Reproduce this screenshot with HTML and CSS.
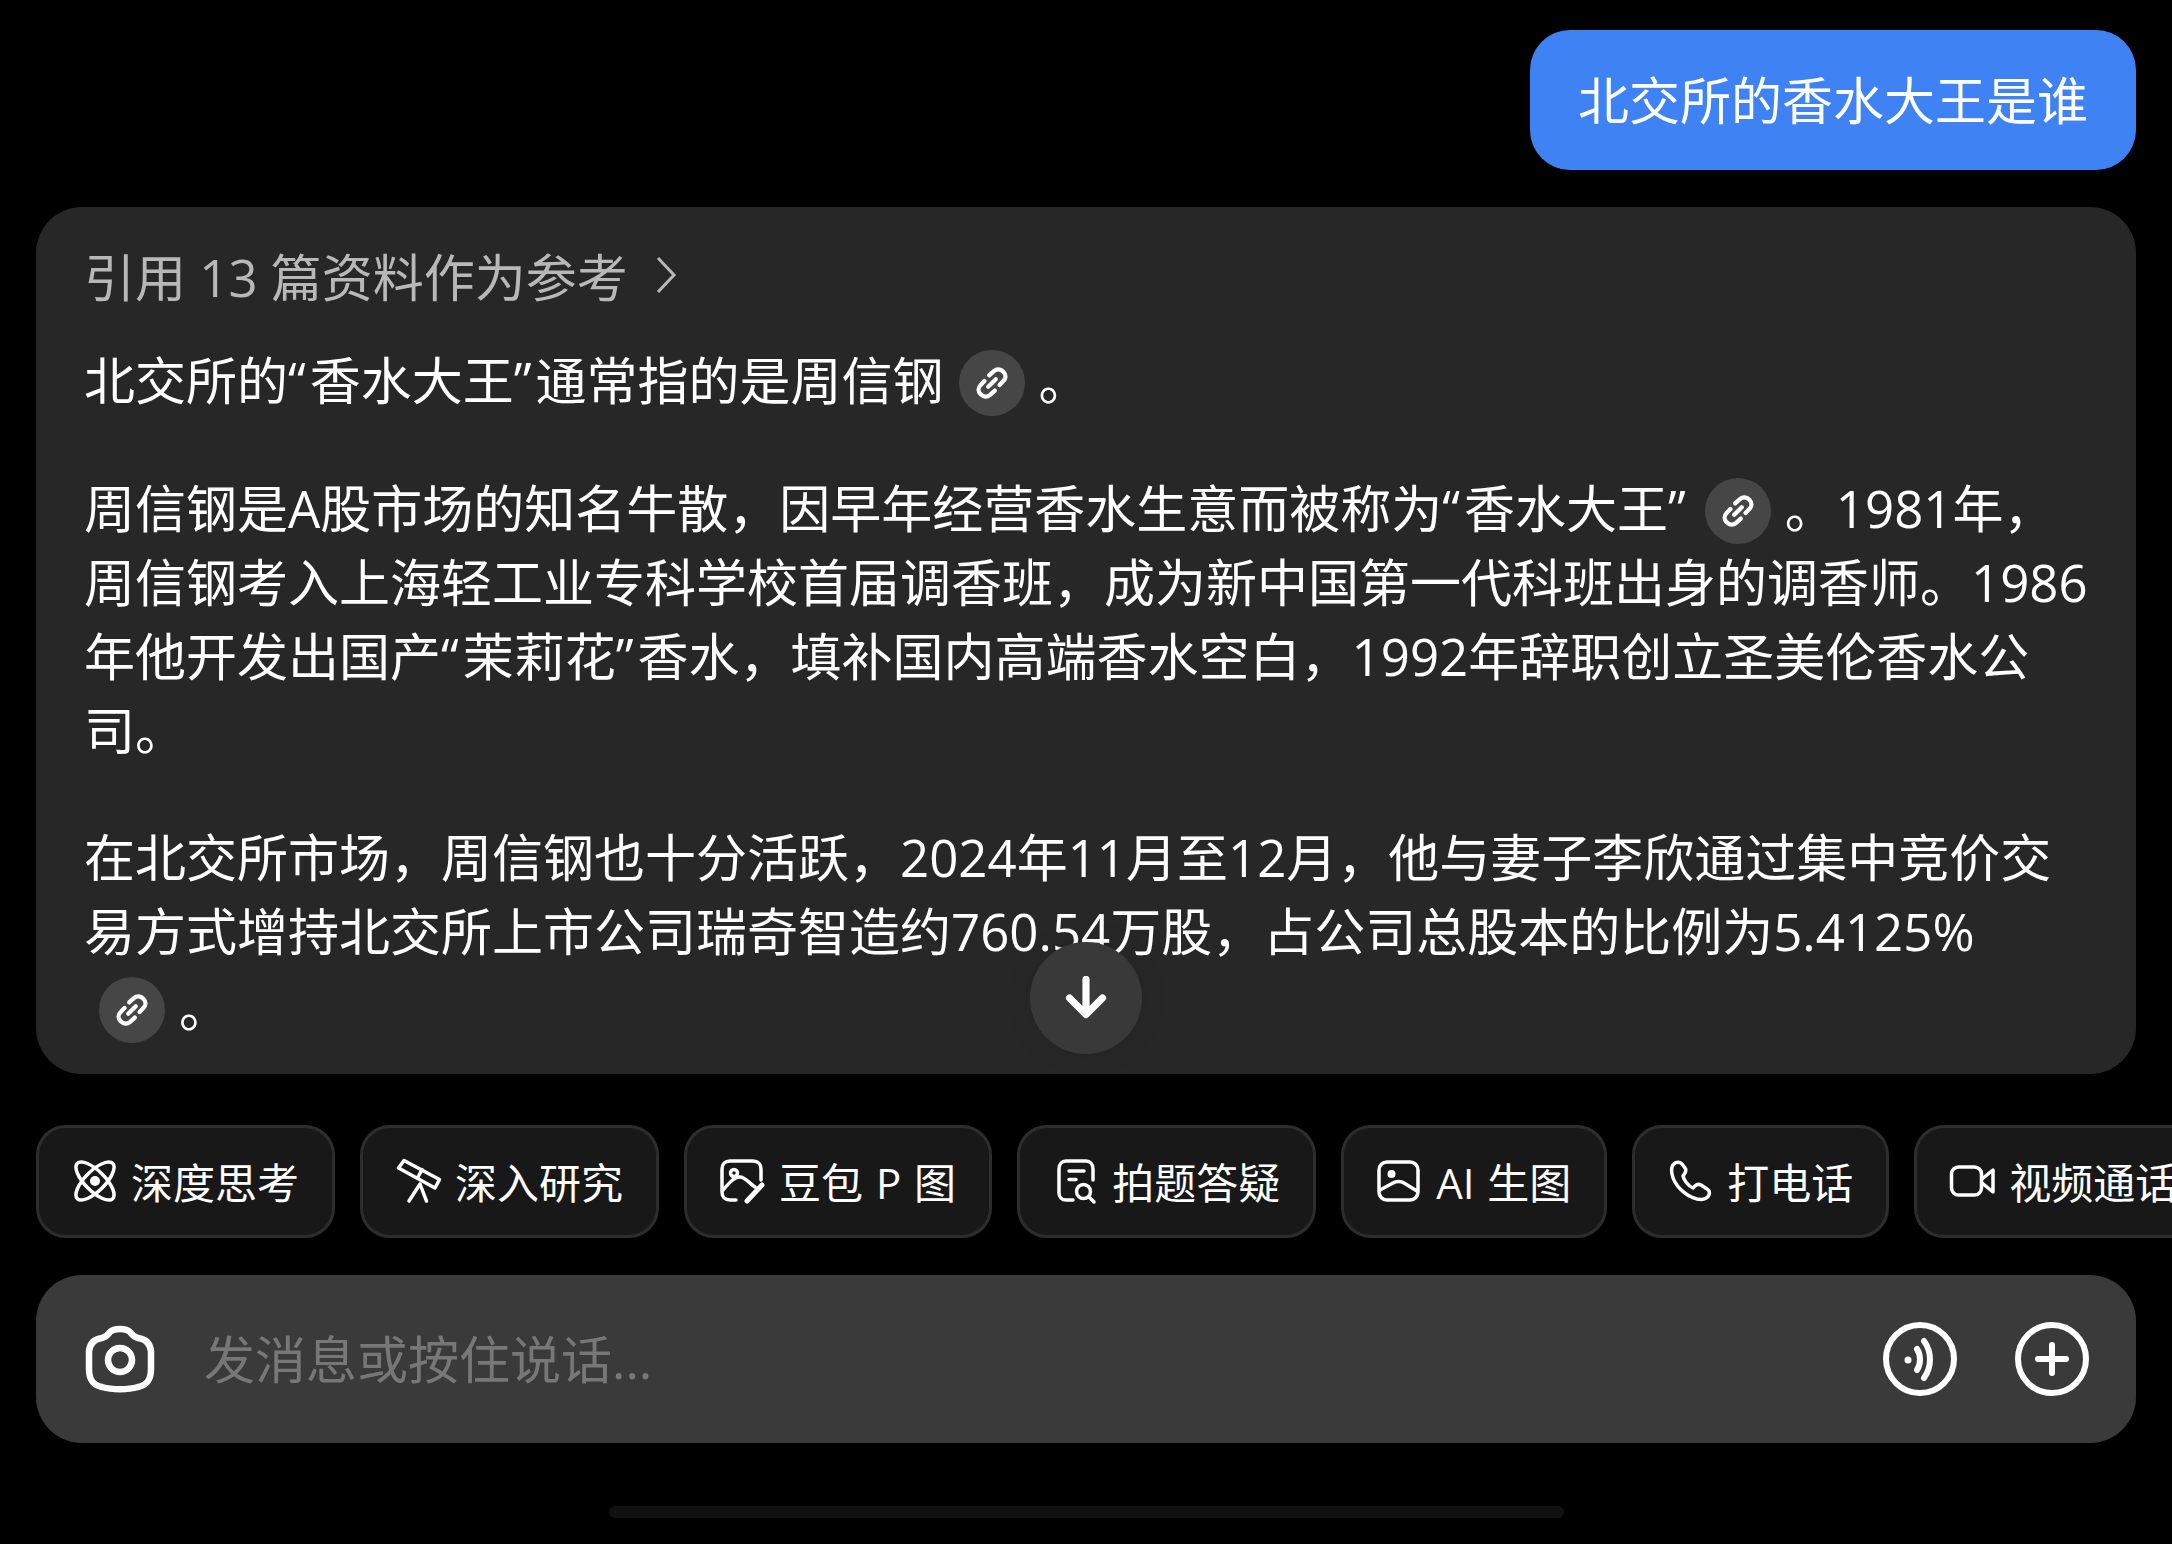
FILE: index.html
```html
<!DOCTYPE html>
<html lang="zh-CN">
<head>
    <meta charset="UTF-8">
    <title>豆包</title>
    <link rel="stylesheet" href="styles.css">
</head>
<body>
    <div class="user-row">
        <div class="user-bubble">北交所的香水大王是谁</div>
    </div>

    <div class="answer-card">
        <div class="refs">
            <span>引用 13 篇资料作为参考</span>
            <svg class="refs-arrow" viewBox="0 0 24 40"><path d="M4 3 L20 20 L4 37"/></svg>
        </div>
        <p>北交所的<span class="quote">“</span>香水大王<span class="quote">”</span>通常指的是周信钢<span class="link-badge"><svg viewBox="0 0 36 36"><use href="#chain"/></svg></span>。</p>
        <p>周信钢是A股市场的知名牛散，因早年经营香水生意而被称为<span class="quote">“</span>香水大王<span class="quote">”</span><span class="link-badge"><svg viewBox="0 0 36 36"><use href="#chain"/></svg></span>。1981年，<br>周信钢考入上海轻工业专科学校首届调香班，成为新中国第一代科班出身的调香师。1986<br>年他开发出国产<span class="quote">“</span>茉莉花<span class="quote">”</span>香水，填补国内高端香水空白，1992年辞职创立圣美伦香水公<br>司。</p>
        <p>在北交所市场，周信钢也十分活跃，2024年11月至12月，他与妻子李欣通过集中竞价交<br>易方式增持北交所上市公司瑞奇智造约760.54万股，占公司总股本的比例为5.4125%<span class="last-line"><span class="link-badge"><svg viewBox="0 0 36 36"><use href="#chain"/></svg></span>。</span></p>
        <button class="scroll-down">
            <svg viewBox="0 0 40 40"><path d="M20 3 V34 M5 20 L20 35 L35 20"/></svg>
        </button>
    </div>

    <div class="chips">
        <div class="chip">
            <svg viewBox="0 0 44 44"><ellipse cx="23" cy="22" rx="10" ry="25" transform="rotate(-45 23 22)"/><ellipse cx="23" cy="22" rx="10" ry="25" transform="rotate(45 23 22)"/><circle class="solid" cx="23" cy="22" r="5"/></svg>
            <span>深度思考</span>
        </div>
        <div class="chip">
            <svg viewBox="0 0 44 44"><path d="M8 1.500 L43.500 20.500 L39 29 L2.500 9 Z"/><path d="M26 10.500 L21.500 19"/><path d="M24 25 L13 42 M24 25 L30.500 42"/></svg>
            <span>深入研究</span>
        </div>
        <div class="chip">
            <svg viewBox="0 0 44 44"><path d="M16 41 H10 C5 41 2 38 2 33 V10 C2 5 5 2 10 2 H33 C38 2 41 5 41 10 V21"/><circle cx="14" cy="14" r="3.500"/><path d="M3 31 C9 24 14 18 20 18 C25 18 29 24 35 28"/><path class="pencil" d="M42 26 L27 42"/></svg>
            <span>豆包 P 图</span>
        </div>
        <div class="chip">
            <svg viewBox="0 0 44 44"><path d="M20 41 H13 C9 41 6 38 6 34 V10 C6 5 9 2 13 2 H33 C37 2 40 5 40 10 V21"/><path d="M16 12 H31 M16 20.500 H23"/><circle cx="30.500" cy="32.500" r="7"/><path d="M36 38 L41 43"/></svg>
            <span>拍题答疑</span>
        </div>
        <div class="chip">
            <svg viewBox="0 0 44 44"><rect x="2" y="3" width="39" height="38" rx="8"/><circle class="solid" cx="14.500" cy="15" r="4"/><path d="M3 31 L16 24 C19 22 24 22 27 24 L40 32"/></svg>
            <span>AI 生图</span>
        </div>
        <div class="chip">
            <svg viewBox="0 0 44 44"><path d="M7 4 C4 6 3 10 4 15 C6 26 17 37 29 40 C34 41 39 40 41 36 C42 33 41 31 39 30 L33 26 C31 25 29 25 27 27 L25 29 C20 27 16 21 15 17 L17 14 C18 12 18 10 17 9 L14 5 C12 3 9 3 7 4 Z"/></svg>
            <span>打电话</span>
        </div>
        <div class="chip">
            <svg viewBox="0 0 44 44"><rect x="1.500" y="8" width="30" height="28" rx="7"/><path d="M32 20 L43 11 V33 L32 24"/></svg>
            <span>视频通话</span>
        </div>
    </div>

    <div class="input-bar">
        <svg class="camera" viewBox="0 0 72 68"><path d="M26 7 C30 3 42 3 46 7 C48 10 50 12 54 13 C62 14 66 18 67 26 V44 C67 55 63 60 54 62 C44 65 28 65 18 62 C9 60 5 55 5 44 V26 C6 18 10 14 18 13 C22 12 24 10 26 7 Z"/><circle cx="36" cy="35" r="12"/></svg>
        <span class="placeholder">发消息或按住说话...</span>
        <div class="input-actions">
            <svg viewBox="0 0 74 74"><circle cx="37" cy="37" r="34"/><circle class="solid" cx="25" cy="38" r="3.500"/><path d="M34 27 C38 33 38 42 34 48"/><path d="M41 19 C49 30 49 45 41 56"/></svg>
            <svg viewBox="0 0 74 74"><circle cx="37" cy="37" r="34"/><path d="M37 23 V51 M23 37 H51"/></svg>
        </div>
    </div>

    <div class="home-bar"></div>

    <svg class="defs" width="0" height="0">
        <symbol id="chain" viewBox="0 0 36 36">
            <path d="M15 10 L20 5.500 C23 3 27 3 30 6 C33 9 33 13 30 16 L26 20" fill="none" stroke="#fff" stroke-width="4.500" stroke-linecap="round"/>
            <path d="M21 26 L16 30.500 C13 33 9 33 6 30 C3 27 3 23 6 20 L10 16" fill="none" stroke="#fff" stroke-width="4.500" stroke-linecap="round"/>
            <path d="M14 22 L22 14" fill="none" stroke="#fff" stroke-width="4.500" stroke-linecap="round"/>
        </symbol>
    </svg>
</body>
</html>
```

FILE: styles.css
```css
* {
    box-sizing: border-box;
}

html, body {
    height: 100%;
}

body {
    margin: 0;
    padding-top: 30px;
    background-color: black;
    color: white;
    font-family: "Open Sans", "Noto Sans CJK SC", sans-serif;
    overflow: hidden;
    display: flex;
    flex-direction: column;
}

.user-row {
    display: flex;
    justify-content: flex-end;
    padding: 0 36px;
}

.user-bubble {
    height: 140px;
    padding: 0 48px 5px;
    display: flex;
    align-items: center;
    border-radius: 40px;
    background: #3e82f3;
    font-size: 51px;
}

.answer-card {
    position: relative;
    height: 867px;
    margin: 37px 36px 0;
    padding: 31px 48px 0;
    border-radius: 46px;
    background: #272727;
    overflow: hidden;
}

.refs {
    display: flex;
    align-items: center;
    gap: 26px;
    height: 74px;
    font-size: 51px;
    color: #b8b8b8;
}

.refs-arrow {
    width: 24px;
    height: 40px;
    fill: none;
    stroke: #b8b8b8;
    stroke-width: 3;
}

.answer-card p {
    margin: 31px 0 53.5px;
    font-size: 51px;
    line-height: 74px;
    white-space: nowrap;
}

.quote {
    letter-spacing: 4px;
}

.link-badge {
    display: inline-flex;
    align-items: center;
    justify-content: center;
    width: 66px;
    height: 66px;
    margin: -13px 14px -7px 15px;
    border-radius: 50%;
    background: #464646;
    vertical-align: middle;
}

.link-badge svg {
    width: 34px;
    height: 34px;
}

.last-line {
    display: block;
    margin-top: 2px;
}

.scroll-down {
    position: absolute;
    left: 994px;
    top: 735px;
    width: 112px;
    height: 112px;
    padding: 0;
    display: flex;
    align-items: center;
    justify-content: center;
    border: 0;
    border-radius: 50%;
    background: #393939;
    box-shadow: 0 0 30px rgba(0, 0, 0, 0.08);
}

.scroll-down svg {
    width: 44px;
    height: 44px;
    fill: none;
    stroke: white;
    stroke-width: 6.5;
    stroke-linecap: round;
    stroke-linejoin: round;
}

.chips {
    display: flex;
    gap: 25px;
    margin-top: 51px;
    padding-left: 36px;
    overflow: hidden;
}

.chip {
    flex: none;
    display: flex;
    align-items: center;
    gap: 15px;
    height: 113px;
    padding: 0 33px 2px;
    border: 3px solid #2d2d2d;
    border-radius: 30px;
    background: #181818;
    font-size: 42px;
    word-spacing: 2px;
}

.chip svg {
    width: 44px;
    height: 44px;
    overflow: visible;
    fill: none;
    stroke: white;
    stroke-width: 3.5;
    stroke-linecap: round;
    stroke-linejoin: round;
}

.chip .pencil {
    stroke-width: 5;
}

.chip .solid,
.solid {
    fill: white;
    stroke: none;
}

.input-bar {
    display: flex;
    align-items: center;
    height: 168px;
    margin: 37px 36px 0;
    padding: 0 47px 0 48px;
    border-radius: 46px;
    background: #3a3a3a;
}

.camera {
    width: 72px;
    height: 68px;
    fill: none;
    stroke: white;
    stroke-width: 6.500;
}

.placeholder {
    margin: 0 0 5px 48px;
    font-size: 51px;
    color: #777;
}

.input-actions {
    display: flex;
    gap: 58px;
    margin-left: auto;
}

.input-actions svg {
    width: 74px;
    height: 74px;
    fill: none;
    stroke: white;
    stroke-width: 6;
    stroke-linecap: round;
}

.home-bar {
    width: 955px;
    height: 12px;
    margin: 63px auto 0;
    border-radius: 6px;
    background: #111;
}

.defs {
    position: absolute;
}
```
